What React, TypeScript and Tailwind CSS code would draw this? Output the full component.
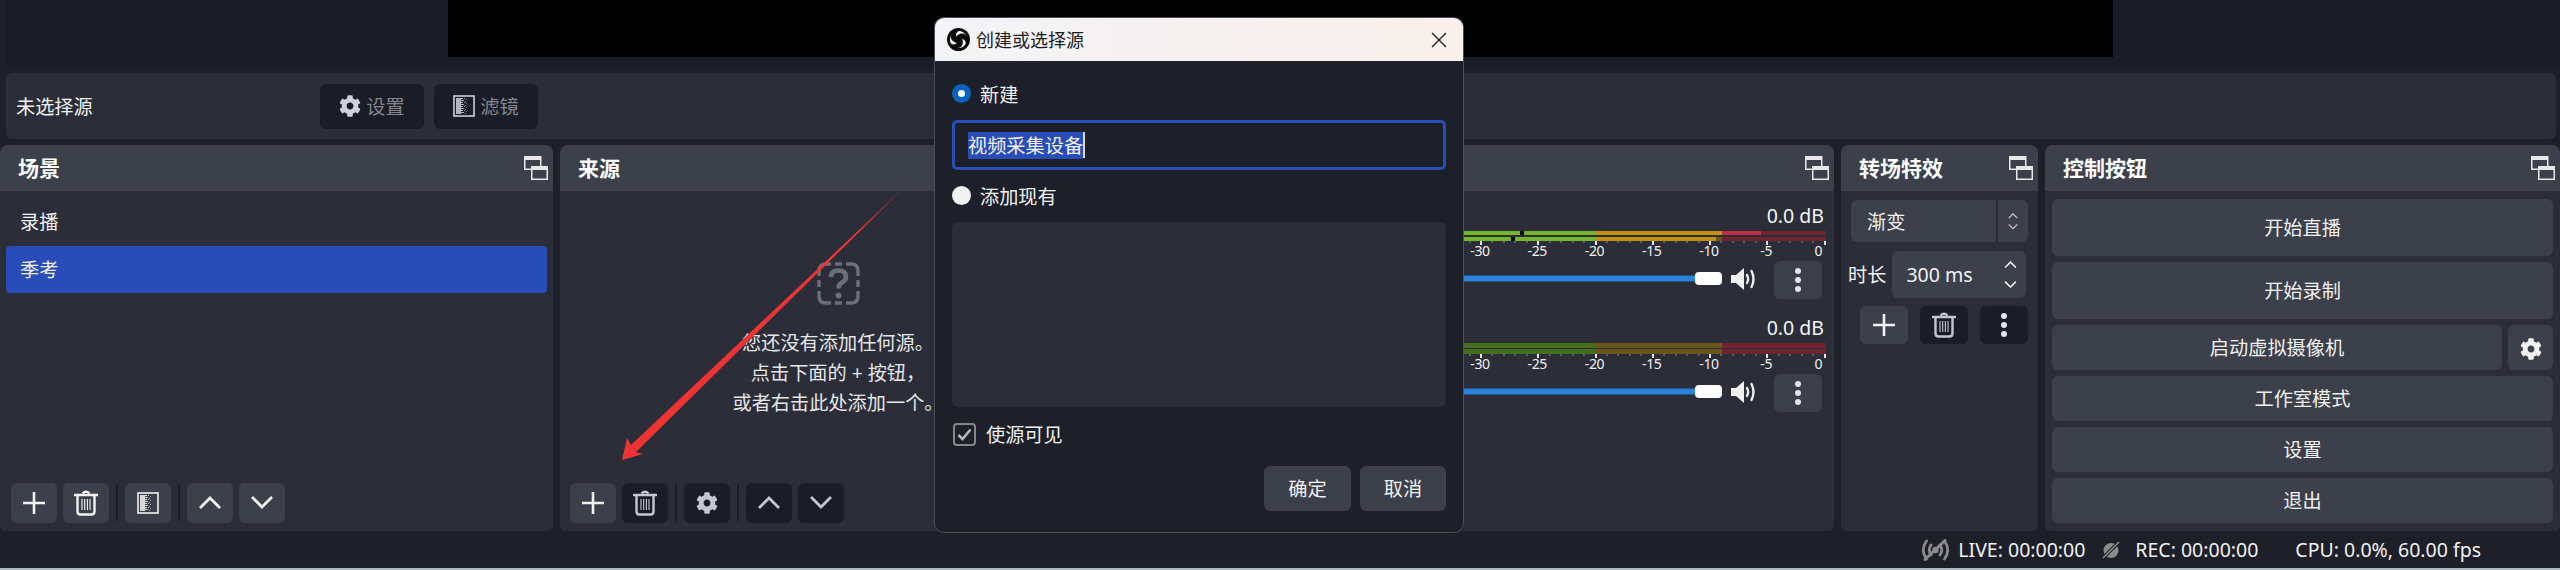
import type { ReactNode } from "react";
import { FaCog } from "react-icons/fa";

const font = "font-['Noto_Sans','Noto_Sans_CJK_SC',sans-serif]";

function DockIcon() {
  return (
    <svg width="24" height="24" viewBox="0 0 24 24" fill="none" className="shrink-0">
      <rect x="0.75" y="0.75" width="16" height="12.5" stroke="#e8e8e8" strokeWidth="1.5" />
      <rect x="0" y="0" width="17" height="4" fill="#e8e8e8" />
      <rect x="7.75" y="10.75" width="15.5" height="12.5" fill="#3c404b" stroke="#e8e8e8" strokeWidth="1.5" />
      <rect x="7" y="10" width="17" height="4" fill="#e8e8e8" />
    </svg>
  );
}

function PlusIcon() {
  return (
    <svg width="24" height="24" viewBox="0 0 24 24">
      <path d="M12 1v22M1 12h22" stroke="#f2f2f2" strokeWidth="2.6" />
    </svg>
  );
}

function TrashIcon({ color = "#f2f2f2" }: { color?: string }) {
  return (
    <svg width="24" height="26" viewBox="0 0 24 26" fill="none">
      <path d="M1 5h22" stroke={color} strokeWidth="2.6" strokeLinecap="round" />
      <path d="M8.5 3.5 Q12 0 15.5 3.5" stroke={color} strokeWidth="2.4" />
      <path d="M3.5 6v15.5q0 3 3 3h11q3 0 3-3V6" stroke={color} strokeWidth="2.4" />
      <path d="M8 9v11M10.7 9v11M13.4 9v11M16 9v11" stroke={color} strokeWidth="1.1" />
    </svg>
  );
}

const ditherRows = Array.from({ length: 8 }, (_, i) => i);

function FilterIcon({ color = "#f2f2f2", size = 22 }: { color?: string; size?: number }) {
  return (
    <svg width={size} height={size} viewBox="0 0 22 22" fill="none">
      <rect x="1" y="1" width="20" height="20" stroke={color} strokeWidth="1.6" />
      <rect x="3" y="3" width="5" height="16" fill={color} opacity="0.85" />
      {ditherRows.map((i) => (
        <g key={i} fill={color}>
          <rect x="8" y={3 + i * 2} width="2" height="1" opacity="0.9" />
          <rect x={i % 2 ? 10 : 11} y={3 + i * 2} width="1" height="1" opacity="0.7" />
          <rect x={i % 2 ? 12 : 13} y={4 + i * 2} width="1" height="1" opacity="0.55" />
        </g>
      ))}
    </svg>
  );
}

function ChevronIcon({ up, size = 24, color = "#f2f2f2", stroke = 2.8 }: { up?: boolean; size?: number; color?: string; stroke?: number }) {
  return (
    <svg width={size} height={size * 0.55} viewBox="0 0 24 13" fill="none">
      <path d={up ? "M2 12 12 2l10 10" : "M2 1l10 10L22 1"} stroke={color} strokeWidth={stroke} />
    </svg>
  );
}

function KebabIcon() {
  return (
    <svg width="8" height="26" viewBox="0 0 8 26" fill="#e4e4e8">
      <circle cx="4" cy="4" r="3" />
      <circle cx="4" cy="13" r="3" />
      <circle cx="4" cy="22" r="3" />
    </svg>
  );
}

function SpeakerIcon() {
  return (
    <svg width="24" height="24" viewBox="0 0 24 24" fill="none">
      <path d="M0 8h5L13 1v22l-8-7H0z" fill="#f0f0f0" />
      <path d="M16 8q2.200 4 0 8M20.500 4q4 8 0 16" stroke="#f0f0f0" strokeWidth="2.400" strokeLinecap="round" />
    </svg>
  );
}

function QuestionIcon() {
  return (
    <svg width="43" height="43" viewBox="0 0 43 43" fill="none" stroke="#6c6f77" strokeWidth="3.4">
      <path d="M14 2H9Q2 2 2 9v5M29 2h5q7 0 7 7v5M14 41H9q-7 0-7-7v-5M29 41h5q7 0 7-7v-5M18 2h7M18 41h7M2 18v7M41 18v7" />
      <path d="M14 15q0-6.500 7.500-6.500T29 15q0 3.500-4 5.500-3.500 2-3.500 6" strokeWidth="4.6" />
      <circle cx="21.500" cy="33.500" r="3" fill="#6c6f77" stroke="none" />
    </svg>
  );
}

function ObsLogo() {
  const blade = "M12 3.2a8.8 8.800 0 0 1 8 5.100 5.300 5.300 0 0 0-7.800-1.600 3.600 3.600 0 0 0-2.300 2.600 5 5 0 0 1 2.100-6.100z";
  return (
    <svg width="23" height="23" viewBox="0 0 24 24">
      <circle cx="12" cy="12" r="12" fill="#0b0b0b" />
      <path d={blade} fill="#f4f4f4" />
      <path d={blade} fill="#f4f4f4" transform="rotate(120 12 12)" />
      <path d={blade} fill="#f4f4f4" transform="rotate(240 12 12)" />
    </svg>
  );
}

function LiveIcon() {
  return (
    <svg width="29" height="22" viewBox="0 0 29 22" fill="none" stroke="#8b8b89" strokeWidth="2.800" strokeLinecap="round">
      <path d="M5.500 2Q-1 11 5.500 20M23.500 2q6.500 9 0 18M10 6q-3.500 5 0 10M19 6q3.500 5 0 10" />
      <circle cx="14.500" cy="11" r="3.200" fill="#8b8b89" stroke="none" />
      <path d="M24 1.500 4 20.500" strokeWidth="3" />
    </svg>
  );
}

function RecIcon() {
  return (
    <svg width="18" height="18" viewBox="0 0 18 18" fill="none">
      <circle cx="9" cy="9.500" r="7.500" fill="#8b8b89" />
      <path d="M17 1 1 17" stroke="#1d1f29" strokeWidth="3.500" />
      <path d="M17 1 1 17" stroke="#8b8b89" strokeWidth="1.600" />
    </svg>
  );
}

function ToolBtn({ dark, className, children }: { dark?: boolean; className?: string; children: ReactNode }) {
  return (
    <div className={`flex items-center justify-center rounded-[6px] ${dark ? "bg-[#1a1c27]" : "bg-[#3c404b]"} ${className ?? "w-[46px] h-[40px]"}`}>
      {children}
    </div>
  );
}

function Sep() {
  return <div className="w-[2px] h-[36px] mx-[1px] bg-[#1a1c27]" />;
}

function Panel({ title, className, children }: { title: string; className: string; children: ReactNode }) {
  return (
    <section className={`flex flex-col shrink-0 h-full rounded-t-[8px] rounded-b-[6px] bg-[#2b2e38] overflow-hidden ${className}`}>
      <header className="flex items-center justify-between h-[46px] shrink-0 pl-[18px] pr-[5px] bg-[#3c404b]">
        <span className="pt-[2px] text-[21px] font-bold text-white">{title}</span>
        <DockIcon />
      </header>
      {children}
    </section>
  );
}

type Segment = { w: number; color: string };

const green = "bg-[#74b72e]";
const yellow = "bg-[#c09210]";
const dimGreen = "bg-[#44701b]";
const dimYellow = "bg-[#6a5619]";
const dimRed = "bg-[#6e2530]";

const channels: { bars: Segment[][]; barClass: string }[] = [
  {
    barClass: "h-[4px] gap-0",
    bars: [
      [
        { w: 390, color: green },
        { w: 4, color: "bg-black" },
        { w: 72, color: green },
        { w: 126, color: yellow },
        { w: 39, color: "bg-[#c32c45]" },
        { w: 65, color: dimRed },
      ],
      [
        { w: 381, color: green },
        { w: 4, color: "bg-black" },
        { w: 81, color: green },
        { w: 120, color: yellow },
        { w: 6, color: dimYellow },
        { w: 104, color: dimRed },
      ],
    ],
  },
  {
    barClass: "h-[5px] gap-0",
    bars: [
      [
        { w: 466, color: dimGreen },
        { w: 126, color: dimYellow },
        { w: 104, color: dimRed },
      ],
      [
        { w: 466, color: dimGreen },
        { w: 126, color: dimYellow },
        { w: 104, color: dimRed },
      ],
    ],
  },
];

const dbRange = Array.from({ length: 61 }, (_, i) => -60 + i);

function Scale() {
  return (
    <div className="relative h-[20px] w-[696px]">
      {dbRange.map((db) => {
        const x = 693.5 + db * 11.45;
        const major = db % 5 === 0;
        return (
          <div key={db}>
            <div
              className={major ? "absolute top-0 w-[2px] h-[4px] bg-[#e8e8e8]" : "absolute top-0 w-[2px] h-[2px] bg-[#5b5d64]"}
              style={{ left: x }}
            />
            {major && (
              <span
                className={`absolute top-[0px] text-[14px] leading-[20px] tracking-[-0.3px] text-[#f0f0f0] ${db === 0 ? "-translate-x-[9px]" : "-translate-x-1/2"}`}
                style={{ left: x }}
              >
                {db}
              </span>
            )}
          </div>
        );
      })}
    </div>
  );
}

function Channel({ bars, barClass, last }: { bars: Segment[][]; barClass: string; last?: boolean }) {
  return (
    <div className={`flex flex-col w-[696px] ${last ? "mt-[16px]" : ""}`}>
      <div className="h-[24px] leading-[26px] text-right pr-[2px] text-[19.5px] text-[#f4f4f4]">0.0 dB</div>
      <div className={`flex flex-col mt-[4px] ${last ? "gap-[1px]" : "gap-[2px]"}`}>
        {bars.map((row, r) => (
          <div key={r} className={`flex ${barClass}`}>
            {row.map((s, i) => (
              <div key={i} className={s.color} style={{ width: s.w }} />
            ))}
          </div>
        ))}
      </div>
      <Scale />
      <div className="flex items-center h-[38px]">
        <div className="mb-[3px] w-[565px] h-[7px] bg-[#2a82da] border-y border-[#24548a]" />
        <div className="mb-[3px] w-[27px] h-[13px] rounded-[4px] bg-white" />
        <div className="mb-[3px] ml-[9px] w-[24px] flex">
          <SpeakerIcon />
        </div>
        <ToolBtn className="ml-[19px] w-[48px] h-[38px]">
          <KebabIcon />
        </ToolBtn>
      </div>
    </div>
  );
}

const controlBtn = "flex items-center justify-center pt-[2px] rounded-[6px] bg-[#3c404b] text-[#f2f2f2]";

export default function App() {
  return (
    <div className={`relative w-[2560px] h-[570px] overflow-hidden flex flex-col bg-[#1d1f29] text-[19.2px] text-[#f2f2f2] ${font}`}>
      {/* Preview */}
      <div className="h-[67px] ml-[6px] bg-[#1a1c27] shrink-0">
        <div className="ml-[442px] w-[1665px] h-[57px] bg-black" />
      </div>

      {/* Context bar */}
      <div className="mt-[6px] ml-[6px] mr-[4px] h-[66px] shrink-0 flex items-center rounded-[6px] bg-[#2b2e38] pl-[10px]">
        <span className="w-[304px] pt-[2px]">未选择源</span>
        <ToolBtn dark className="w-[104px] h-[45px] gap-[5px] text-[#85868c]">
          <FaCog size={22} color="#cfd1da" />
          <span className="pt-[2px]">设置</span>
        </ToolBtn>
        <ToolBtn dark className="ml-[10px] w-[104px] h-[45px] gap-[5px] text-[#85868c]">
          <FilterIcon color="#cfd1da" />
          <span className="pt-[2px]">滤镜</span>
        </ToolBtn>
      </div>

      {/* Docks */}
      <div className="mt-[6px] h-[386px] shrink-0 flex gap-[7px]">
        <Panel title="场景" className="w-[553px]">
          <div className="flex flex-col px-[6px] pt-[8px]">
            <div className="h-[47px] flex items-center pl-[14px]">录播</div>
            <div className="h-[47px] flex items-center pl-[14px] pt-[1px] rounded-[4px] bg-[#284cb8]">季考</div>
          </div>
          <div className="mt-auto mb-[8px] ml-[11px] flex items-center gap-[6px]">
            <ToolBtn><PlusIcon /></ToolBtn>
            <ToolBtn><TrashIcon /></ToolBtn>
            <Sep />
            <ToolBtn><FilterIcon /></ToolBtn>
            <Sep />
            <ToolBtn><ChevronIcon up /></ToolBtn>
            <ToolBtn><ChevronIcon /></ToolBtn>
          </div>
        </Panel>

        <Panel title="来源" className="w-[556px]">
          <div className="flex flex-col items-center pt-[71px]">
            <QuestionIcon />
            <div className="mt-[23px] text-center leading-[30px] text-[#e6e6e8]">
              <div>您还没有添加任何源。</div>
              <div>点击下面的 + 按钮，</div>
              <div>或者右击此处添加一个。</div>
            </div>
          </div>
          <div className="mt-auto mb-[8px] ml-[10px] flex items-center gap-[6px]">
            <ToolBtn><PlusIcon /></ToolBtn>
            <ToolBtn dark><TrashIcon color="#c5c7d0" /></ToolBtn>
            <Sep />
            <ToolBtn dark><FaCog size={22} color="#c5c7d0" /></ToolBtn>
            <Sep />
            <ToolBtn dark><ChevronIcon up color="#c5c7d0" /></ToolBtn>
            <ToolBtn dark><ChevronIcon color="#c5c7d0" /></ToolBtn>
          </div>
        </Panel>

        <Panel title="音频混音器" className="w-[711px]">
          <div className="flex flex-col pt-[12px] pl-[7px]">
            {channels.map((c, i) => (
              <Channel key={i} bars={c.bars} barClass={c.barClass} last={i === 1} />
            ))}
          </div>
        </Panel>

        <Panel title="转场特效" className="w-[197px]">
          <div className="flex flex-col pt-[9px]">
            <div className="ml-[10px] w-[177px] h-[42px] flex rounded-[6px] bg-[#3c404b]">
              <div className="flex-1 flex items-center pl-[16px] pt-[2px] border-r-2 border-[#2b2e38]">渐变</div>
              <div className="w-[30px] flex flex-col items-center justify-center gap-[5px]">
                <ChevronIcon up size={10} color="#c5c7d0" stroke={3} />
                <ChevronIcon size={10} color="#c5c7d0" stroke={3} />
              </div>
            </div>
            <div className="mt-[9px] ml-[7px] flex items-center gap-[6px]">
              <span className="pt-[1px]">时长</span>
              <div className="w-[134px] h-[47px] flex items-center justify-between pl-[14px] pr-[9px] rounded-[6px] bg-[#3c404b] text-[19.5px]">
                <span className="pt-[1px]">300 ms</span>
                <div className="flex flex-col items-center gap-[12px]">
                  <ChevronIcon up size={13} />
                  <ChevronIcon size={13} />
                </div>
              </div>
            </div>
            <div className="mt-[8px] ml-[19px] flex gap-[12px]">
              <ToolBtn className="w-[48px] h-[38px]"><PlusIcon /></ToolBtn>
              <ToolBtn dark className="w-[48px] h-[38px]"><TrashIcon color="#c5c7d0" /></ToolBtn>
              <ToolBtn dark className="w-[48px] h-[38px]"><KebabIcon /></ToolBtn>
            </div>
          </div>
        </Panel>

        <Panel title="控制按钮" className="w-[515px]">
          <div className="flex flex-col gap-[6px] pt-[8px] pl-[7px] pr-[7px]">
            <div className={`h-[57px] ${controlBtn}`}>开始直播</div>
            <div className={`h-[57px] ${controlBtn}`}>开始录制</div>
            <div className="flex gap-[6px]">
              <div className={`flex-1 h-[45px] ${controlBtn}`}>启动虚拟摄像机</div>
              <div className={`w-[45px] h-[45px] ${controlBtn}`}>
                <FaCog size={22} color="#f2f2f2" />
              </div>
            </div>
            <div className={`h-[45px] ${controlBtn}`}>工作室模式</div>
            <div className={`h-[45px] ${controlBtn}`}>设置</div>
            <div className={`h-[45px] ${controlBtn}`}>退出</div>
          </div>
        </Panel>
      </div>

      {/* Status bar */}
      <div className="flex-1 flex items-center justify-end pr-[79px] text-[19.5px] leading-none">
        <LiveIcon />
        <span className="ml-[8px]">LIVE: 00:00:00</span>
        <span className="ml-[17px] flex"><RecIcon /></span>
        <span className="ml-[15px]">REC: 00:00:00</span>
        <span className="ml-[37px]">CPU: 0.0%, 60.00 fps</span>
      </div>
      <div className="h-[2px] shrink-0 bg-[#a9b8bc]" />

      {/* Red annotation arrow */}
      <svg className="absolute left-0 top-0 pointer-events-none" width="2560" height="570" fill="none">
        <defs>
          <linearGradient id="arrowFade" x1="912" y1="180" x2="860" y2="230" gradientUnits="userSpaceOnUse">
            <stop offset="0" stopColor="#ee3333" stopOpacity="0.25" />
            <stop offset="1" stopColor="#ee3333" />
          </linearGradient>
        </defs>
        <path d="M912 180 636 452 643 454 622 460 627 438 631 445z" fill="url(#arrowFade)" />
      </svg>

      {/* Create/select source dialog */}
      <div className="absolute left-[934px] top-[17px] w-[530px] h-[516px] flex flex-col overflow-hidden rounded-[10px] border-[1.500px] border-[#4b4d54] bg-[#1d1f29]">
        <div className="h-[43px] shrink-0 flex items-center pl-[12px] pr-[16px] bg-gradient-to-r from-[#f3f4f7] to-[#f9efeb] text-[#1c1c1c] text-[18px]">
          <ObsLogo />
          <span className="ml-[6px] pt-[1px]">创建或选择源</span>
          <svg className="ml-auto" width="16" height="16" viewBox="0 0 16 16" stroke="#222" strokeWidth="1.400">
            <path d="M1 1l14 14M15 1 1 15" />
          </svg>
        </div>
        <div className="flex flex-col px-[17px]">
          <div className="mt-[23px] h-[19px] flex items-center gap-[9px]">
            <div className="w-[19px] h-[19px] rounded-full bg-[#0a64bf] flex items-center justify-center">
              <div className="w-[7px] h-[7px] rounded-full bg-white" />
            </div>
            <span className="pt-[4px]">新建</span>
          </div>
          <div className="mt-[17px] h-[50px] flex items-center pl-[13px] rounded-[5px] border-[3px] border-[#284cb8]">
            <span className="h-[27px] leading-[27px] bg-[#284cb8]">视频采集设备</span>
            <span className="w-[2px] h-[26px] bg-[#d8d8d8]" />
          </div>
          <div className="mt-[16px] h-[19px] flex items-center gap-[9px]">
            <div className="w-[19px] h-[19px] rounded-full bg-[#f2f2f2]" />
            <span className="pt-[4px]">添加现有</span>
          </div>
          <div className="mt-[17px] h-[185px] rounded-[6px] bg-[#2b2e38]" />
          <div className="mt-[16px] h-[23px] flex items-center gap-[10px] pl-[1px]">
            <div className="w-[23px] h-[23px] rounded-[4px] border-2 border-[#85868c] flex items-center justify-center">
              <svg width="15" height="13" viewBox="0 0 15 13" fill="none" stroke="#b4b5b9" strokeWidth="2.600">
                <path d="M1.500 7l4 4 8-9.500" />
              </svg>
            </div>
            <span className="pt-[2px]">使源可见</span>
          </div>
          <div className="mt-[20px] flex justify-end gap-[9px]">
            <div className={`w-[87px] h-[45px] ${controlBtn}`}>确定</div>
            <div className={`w-[86px] h-[45px] ${controlBtn}`}>取消</div>
          </div>
        </div>
      </div>
    </div>
  );
}
